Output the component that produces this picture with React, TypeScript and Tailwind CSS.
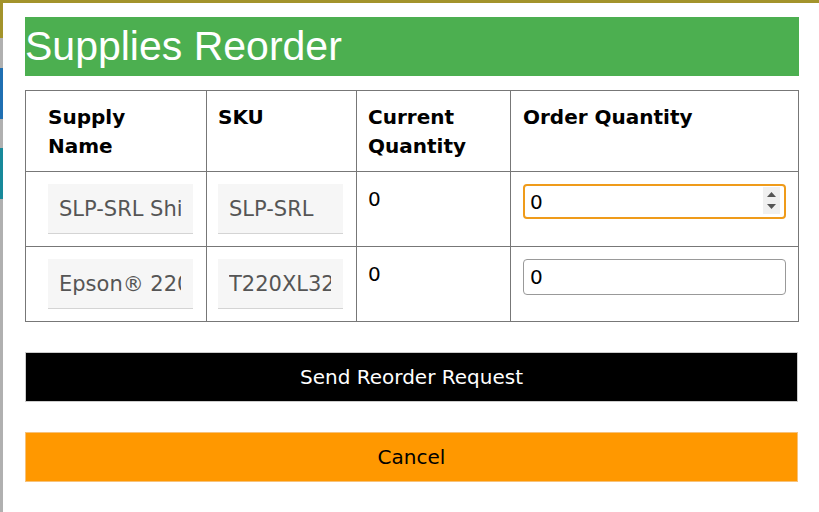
const verdana = "font-['DejaVu_Sans',Verdana,sans-serif]";

const rows = [
  { name: "SLP-SRL Shipping Labels", sku: "SLP-SRL", current: 0, focused: true },
  { name: "Epson® 220XL Black Ink", sku: "T220XL320", current: 0, focused: false },
];

function Spinner() {
  return (
    <div className="absolute right-[6px] top-[3px] flex h-[27px] w-[17px] flex-col items-center justify-center gap-[7px] bg-[#f0f0f0]">
      <svg width="9" height="5" viewBox="0 0 9 5">
        <path d="M0 5 L4.5 0 L9 5 Z" fill="#555" />
      </svg>
      <svg width="9" height="5" viewBox="0 0 9 5">
        <path d="M0 0 L9 0 L4.5 5 Z" fill="#555" />
      </svg>
    </div>
  );
}

function ReadOnlyField({ value, width }: { value: string; width: string }) {
  return (
    <input
      readOnly
      value={value}
      className={`${width} h-[50px] border-0 border-b border-[#d4d4d4] bg-[#f6f6f6] pl-[11px] pr-[12px] text-[21px] text-[#555] outline-none ${verdana}`}
    />
  );
}

export default function App() {
  return (
    <div className="flex h-[512px] w-[819px] flex-col overflow-hidden bg-white">
      <div className="h-[3px] shrink-0 bg-[#a3932b]" />
      <div className="flex flex-1 flex-row">
        <div className="flex w-[3px] shrink-0 flex-col">
          <div className="h-[35px] bg-[#a3932b]" />
          <div className="h-[30px] bg-[#b0b0b0]" />
          <div className="h-[51px] bg-[#1f6fb2]" />
          <div className="h-[29px] bg-[#b0b0b0]" />
          <div className="h-[51px] bg-[#17899a]" />
          <div className="flex-1 bg-[#b0b0b0]" />
        </div>
        <div className="flex-1 pl-[22px] pr-[21px] pt-[14px]">
          <div className="flex h-[59px] items-center bg-[#4caf50]">
            <h1 className="font-['Liberation_Sans',Arial,sans-serif] text-[41px] leading-none text-white">Supplies Reorder</h1>
          </div>

          <table className={`mt-[14px] w-[773px] table-fixed border-collapse border border-[#777] text-[20px] text-black ${verdana}`}>
            <colgroup>
              <col className="w-[181px]" />
              <col className="w-[150px]" />
              <col className="w-[154px]" />
              <col className="w-[288px]" />
            </colgroup>
            <thead>
              <tr className="h-[80px]">
                <th className="border border-[#777] pb-[10px] pl-[22px] pr-[10px] pt-[12px] text-left align-top font-bold leading-[29px]">Supply Name</th>
                <th className="border border-[#777] pb-[10px] pl-[11px] pr-[10px] pt-[12px] text-left align-top font-bold leading-[29px]">SKU</th>
                <th className="border border-[#777] pb-[10px] pl-[11px] pr-[10px] pt-[12px] text-left align-top font-bold leading-[29px]">Current Quantity</th>
                <th className="border border-[#777] pb-[10px] pl-[12px] pr-[10px] pt-[12px] text-left align-top font-bold leading-[29px]">Order Quantity</th>
              </tr>
            </thead>
            <tbody>
              {rows.map((r) => (
                <tr key={r.sku} className="h-[74px]">
                  <td className="border border-[#777] py-[12px] pl-[22px] align-top">
                    <ReadOnlyField value={r.name} width="w-[145px]" />
                  </td>
                  <td className="border border-[#777] py-[12px] pl-[11px] align-top">
                    <ReadOnlyField value={r.sku} width="w-[125px]" />
                  </td>
                  <td className="border border-[#777] py-[12px] pl-[11px] align-top leading-[29px]">
                    <span className="relative top-[1px]">{r.current}</span>
                  </td>
                  <td className="border border-[#777] py-[12px] pl-[12px] align-top">
                    <div className="relative w-[263px]">
                      <input
                        readOnly
                        value="0"
                        className={
                          r.focused
                            ? `h-[35px] w-full rounded-[4px] border-2 border-[#ef9b1a] pl-[5px] text-[20px] text-black outline-none ${verdana}`
                            : `h-[36px] w-full rounded-[4px] border border-[#999] pl-[6px] text-[20px] text-black outline-none ${verdana}`
                        }
                      />
                      {r.focused && <Spinner />}
                    </div>
                  </td>
                </tr>
              ))}
            </tbody>
          </table>

          <button className={`mt-[30px] flex h-[50px] w-[773px] items-center justify-center border border-[#ccc] bg-black text-[20px] text-white ${verdana}`}>
            Send Reorder Request
          </button>
          <button className={`mt-[30px] flex h-[50px] w-[773px] items-center justify-center border border-[#f7c27a] bg-[#ff9800] text-[20px] text-black ${verdana}`}>
            Cancel
          </button>
        </div>
      </div>
    </div>
  );
}
